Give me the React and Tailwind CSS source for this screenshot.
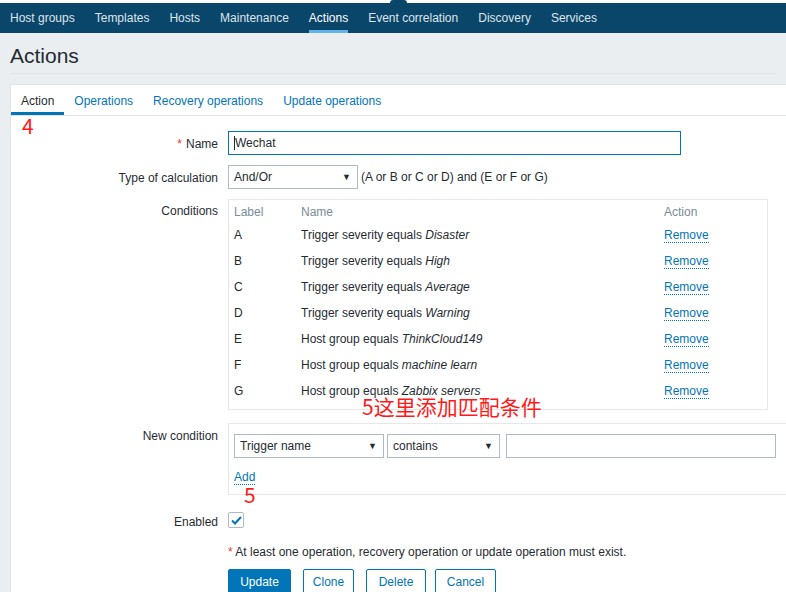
import React from "react";

const navItems = ["Host groups", "Templates", "Hosts", "Maintenance", "Actions", "Event correlation", "Discovery", "Services"];
const tabs = ["Action", "Operations", "Recovery operations", "Update operations"];

const conditions = [
    {label: "A", text: "Trigger severity equals ", value: "Disaster"},
    {label: "B", text: "Trigger severity equals ", value: "High"},
    {label: "C", text: "Trigger severity equals ", value: "Average"},
    {label: "D", text: "Trigger severity equals ", value: "Warning"},
    {label: "E", text: "Host group equals ", value: "ThinkCloud149"},
    {label: "F", text: "Host group equals ", value: "machine learn"},
    {label: "G", text: "Host group equals ", value: "Zabbix servers"},
];

function Select({value, width}) {
    return (
        <div className={`${width} h-[24px] border border-[#acbbc4] bg-white flex items-center justify-between pl-[5px] pr-[6px] text-[12px] text-[#1f2c33]`}>
            <span>{value}</span>
            <span className="text-[9px] leading-none">▼</span>
        </div>
    );
}

function Link({children}) {
    return (
        <span className="text-[#0275b8] border-b border-dotted border-[#0275b8] leading-[14px]">{children}</span>
    );
}

function Row({label, required, className, labelClass, children}) {
    return (
        <div className={`flex ${className || ""}`}>
            <div className={`w-[217px] shrink-0 text-right pr-[10px] text-[12px] text-[#1f2c33] ${labelClass || ""}`}>
                {required && <span className="text-[#e33734] mr-[4px]">*</span>}
                {label}
            </div>
            <div className="flex-1">{children}</div>
        </div>
    );
}

export default function App() {
    const red = "text-[#ff1a1a]";
    return (
        <div className="w-[786px] h-[592px] overflow-hidden bg-[#ebeef0] relative" style={{fontFamily: '"Liberation Sans", Arial, sans-serif'}}>
            {/* top strip */}
            <div className="h-[3px] bg-white relative">
                <div className="absolute left-[390px] top-[0px] w-[17px] h-[3px] rounded-t-full bg-[#0a466a]"></div>
            </div>
            <nav className="h-[30px] bg-[#0a466a] flex">
                {navItems.map((item) => (
                    <div key={item} className={`px-[10px] h-full flex items-center relative text-[12px] ${item === "Actions" ? "text-white" : "text-[#dde5ea]"}`}>
                        <span>{item}</span>
                        {item === "Actions" && (
                            <div className="absolute left-[10px] right-[10px] bottom-0 h-[3px] bg-[#62b3ec]"></div>
                        )}
                    </div>
                ))}
            </nav>

            <div className="px-[10px]">
                <h1 className="h-[41px] border-b border-[#dfe4e7] text-[21px] text-[#1f2c33] leading-none pt-[12px]">Actions</h1>

                <div className="mt-[10px] w-[800px] bg-white border border-[#dfe4e7] relative pb-[20px]">
                    {/* tabs */}
                    <div className="flex h-[31px] border-b border-[#dfe4e7]">
                        {tabs.map((t, i) => (
                            <div key={t} className={`px-[10px] h-full flex items-center relative text-[12px] ${i === 0 ? "text-[#1f2c33]" : "text-[#0275b8]"}`}>
                                <span className="mt-[1px]">{t}</span>
                                {i === 0 && <div className="absolute left-0 right-0 bottom-0 h-[3px] bg-[#0275b8]"></div>}
                            </div>
                        ))}
                    </div>

                    <div className={`absolute left-[11px] top-[30px] text-[21px] leading-none ${red}`} style={{fontFamily: '"Noto Sans CJK SC", sans-serif'}}>4</div>

                    <div className="pt-[15px]">
                        <Row label="Name" required labelClass="pt-[4px]">
                            <div className="w-[453px] h-[24px] border border-[#0275b8] flex items-center pl-[5px] text-[12px] text-[#1f2c33]">
                                <span className="w-px h-[14px] bg-[#1f2c33]"></span>
                                <span>Wechat</span>
                            </div>
                        </Row>

                        <Row label="Type of calculation" className="mt-[10px]" labelClass="pt-[4px]">
                            <div className="flex items-center">
                                <Select value="And/Or" width="w-[130px]" />
                                <span className="ml-[3px] text-[12px] text-[#1f2c33]">(A or B or C or D) and (E or F or G)</span>
                            </div>
                        </Row>

                        <Row label="Conditions" className="mt-[10px]" labelClass="pt-[3px]">
                            <div className="w-[540px] h-[211px] border border-[#e4e8ea] px-[5px] pt-[2px] text-[12px]">
                                <div className="flex h-[20px] items-center text-[#768d99]">
                                    <div className="w-[67px]">Label</div>
                                    <div className="w-[363px]">Name</div>
                                    <div>Action</div>
                                </div>
                                {conditions.map((c) => (
                                    <div key={c.label} className="flex h-[26px] items-center text-[#1f2c33]">
                                        <div className="w-[67px]">{c.label}</div>
                                        <div className="w-[363px]">{c.text}<i>{c.value}</i></div>
                                        <div><Link>Remove</Link></div>
                                    </div>
                                ))}
                            </div>
                        </Row>

                        <Row label="New condition" className="mt-[13px]" labelClass="pt-[4px]">
                            <div className="w-[560px] h-[72px] border border-[#e4e8ea] px-[5px] pt-[10px] text-[12px]">
                                <div className="flex items-center">
                                    <Select value="Trigger name" width="w-[150px]" />
                                    <div className="ml-[3px]"><Select value="contains" width="w-[113px]" /></div>
                                    <div className="ml-[6px] w-[270px] h-[24px] border border-[#acbbc4]"></div>
                                </div>
                                <div className="mt-[10px]"><Link>Add</Link></div>
                            </div>
                        </Row>

                        <Row label="Enabled" className="mt-[17px]" labelClass="pt-[1px]">
                            <div className="w-[16px] h-[16px] border border-[#acbbc4] rounded-[2px] flex items-center justify-center bg-white">
                                <svg width="11" height="9" viewBox="0 0 11 9">
                                    <path d="M1 4.5 L4 7.5 L10 1" stroke="#0275b8" strokeWidth="2" fill="none" />
                                </svg>
                            </div>
                        </Row>

                        <div className="ml-[217px] mt-[12px] text-[12px] text-[#1f2c33]">
                            <span className="text-[#e33734]">*</span> At least one operation, recovery operation or update operation must exist.
                        </div>

                        <div className="ml-[217px] mt-[8px] flex text-[12px]">
                            <div className="w-[63px] h-[25px] bg-[#0275b8] border border-[#0275b8] text-white flex items-center justify-center rounded-[2px]">Update</div>
                            <div className="ml-[12px] w-[51px] h-[25px] border border-[#0275b8] text-[#0275b8] flex items-center justify-center rounded-[2px]">Clone</div>
                            <div className="ml-[12px] w-[60px] h-[25px] border border-[#0275b8] text-[#0275b8] flex items-center justify-center rounded-[2px]">Delete</div>
                            <div className="ml-[9px] w-[61px] h-[25px] border border-[#0275b8] text-[#0275b8] flex items-center justify-center rounded-[2px]">Cancel</div>
                        </div>
                    </div>

                    <div className={`absolute left-[351px] top-[311px] text-[21px] leading-none ${red}`} style={{fontFamily: '"Noto Sans CJK SC", sans-serif'}}>5这里添加匹配条件</div>
                    <div className={`absolute left-[233px] top-[399px] text-[21px] leading-none ${red}`} style={{fontFamily: '"Noto Sans CJK SC", sans-serif'}}>5</div>
                </div>
            </div>
        </div>
    );
}
